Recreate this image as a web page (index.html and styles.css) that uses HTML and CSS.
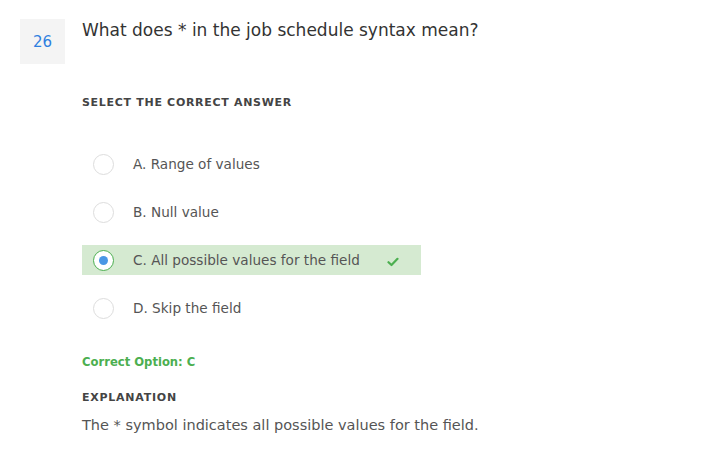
FILE: index.html
```html
<!DOCTYPE html>
<html>
<head>
<meta charset="utf-8">
<link rel="stylesheet" href="styles.css">
</head>
<body>
<div class="question">
  <div class="qnum">26</div>
  <div class="qbody">
    <h1 class="qtitle">What does * in the job schedule syntax mean?</h1>
    <div class="label select-label">SELECT THE CORRECT ANSWER</div>
    <ul class="options">
      <li class="option"><span class="radio"></span><span class="otext">A. Range of values</span></li>
      <li class="option"><span class="radio"></span><span class="otext">B. Null value</span></li>
      <li class="option correct"><span class="radio checked"><span class="dot"></span></span><span class="otext">C. All possible values for the field</span>
        <svg class="check" width="12" height="10" viewBox="0 0 12 10"><path d="M1.5 5.2 L4.5 8 L10.5 1.8" fill="none" stroke="#4caf50" stroke-width="2.2" stroke-linecap="round" stroke-linejoin="round"/></svg>
      </li>
      <li class="option"><span class="radio"></span><span class="otext">D. Skip the field</span></li>
    </ul>
    <div class="correct-option">Correct Option: C</div>
    <div class="label expl-label">EXPLANATION</div>
    <p class="expl">The * symbol indicates all possible values for the field.</p>
  </div>
</div>
</body>
</html>
```
FILE: styles.css
```css
html, body {
  margin: 0;
  padding: 0;
  background: #fff;
}
body {
  font-family: "DejaVu Sans", "Liberation Sans", sans-serif;
  color: #333;
}
.question {
  display: flex;
  align-items: flex-start;
  gap: 17px;
  padding: 19px 0 0 20px;
}
.qnum {
  width: 45px;
  height: 45px;
  flex: none;
  background: #f4f4f4;
  color: #2f7fe0;
  font-size: 15px;
  display: flex;
  align-items: center;
  justify-content: center;
}
.qbody {
  flex: 1;
}
.qtitle {
  margin: 0;
  font-size: 17px;
  font-weight: 400;
  line-height: 22px;
  color: #333;
}
.label {
  font-size: 11px;
  font-weight: 700;
  letter-spacing: 0.7px;
  color: #444;
  line-height: 14px;
}
.select-label {
  margin-top: 55px;
}
.options {
  list-style: none;
  margin: 0;
  padding: 0;
  margin-top: 39px;
  width: 339px;
  display: flex;
  flex-direction: column;
  gap: 18px;
}
.option {
  height: 30px;
  display: flex;
  align-items: center;
  padding-left: 11px;
  font-size: 13.6px;
  color: #555;
}
.option.correct {
  background: #d5ead1;
}
.radio {
  width: 19px;
  height: 19px;
  border: 1px solid #ddd;
  border-radius: 50%;
  flex: none;
  display: flex;
  align-items: center;
  justify-content: center;
  background: #fff;
}
.radio.checked {
  border-color: #4caf50;
}
.dot {
  width: 9px;
  height: 9px;
  border-radius: 50%;
  background: #4a97e5;
}
.otext {
  margin-left: 19px;
}
.check {
  margin-left: auto;
  margin-right: 22px;
  margin-top: 4px;
}
.correct-option {
  margin-top: 32px;
  font-size: 11.6px;
  font-weight: 700;
  color: #4caf50;
}
.expl-label {
  margin-top: 22px;
  letter-spacing: 0.75px;
}
.expl {
  margin: 12px 0 0;
  font-size: 14.5px;
  color: #555;
}
```
